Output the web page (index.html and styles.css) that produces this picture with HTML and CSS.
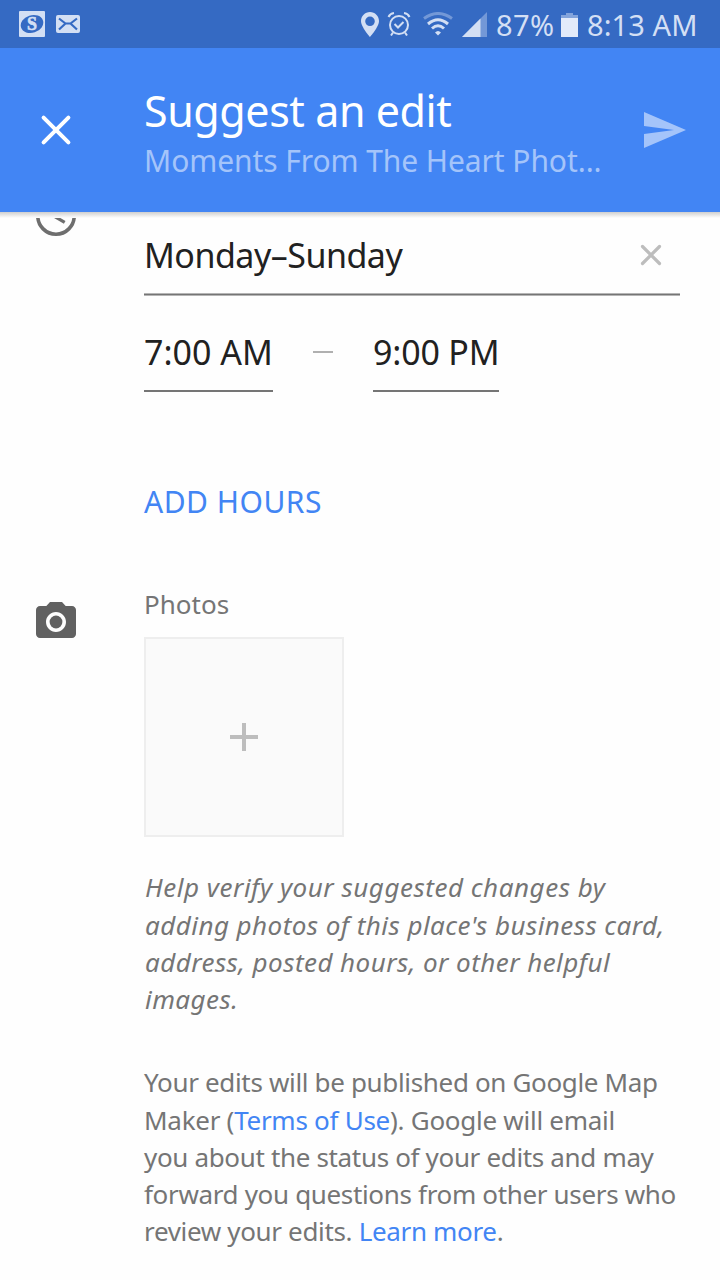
FILE: index.html
```html
<!DOCTYPE html>
<html lang="en">
<head>
    <meta charset="UTF-8">
    <meta name="viewport" content="width=device-width, initial-scale=1.0">
    <link rel="stylesheet" href="styles.css">
    <title>Suggest an edit</title>
</head>
<body>
    <div class="status-bar">
        <svg class="app-icon" width="26" height="26" viewBox="0 0 26 26">
            <rect width="26" height="26" rx="1" fill="#d3dff4"/>
            <ellipse cx="13" cy="13" rx="11.5" ry="8.8" transform="rotate(-18 13 13)" fill="#356ac3"/>
            <text x="13" y="19.300" text-anchor="middle" class="app-letter">S</text>
        </svg>
        <svg class="mail-icon" width="24" height="18" viewBox="0 0 24 18">
            <rect width="24" height="18" rx="2" fill="#d3dff4"/>
            <path d="M3 3.500l6.500 5h5l6.500-5M3 14.500l6.500-6M21 14.500l-6.500-6" fill="none" stroke="#356ac3" stroke-width="2.200"/>
        </svg>
        <div class="status-right">
            <svg class="pin-icon" width="18" height="25" viewBox="0 0 18 25">
                <path fill-rule="evenodd" d="M9 0C4 0 0 4 0 9c0 6 9 16 9 16s9-10 9-16c0-5-4-9-9-9zm0 4.500a4.800 4.800 0 1 1 0 9.600a4.800 4.800 0 0 1 0-9.600z" fill="#d3dff4"/>
            </svg>
            <svg class="alarm-icon" width="24" height="24" viewBox="0 0 24 24" fill="none" stroke="#d3dff4">
                <circle cx="12" cy="13" r="9" stroke-width="2"/>
                <path d="M7.500 12l3.500 3.500 5.500-5.500" stroke-width="2"/>
                <path d="M1.500 5Q3 1.500 7 1M22.500 5Q21 1.500 17 1M6 20.500l-2 3M18 20.500l2 3" stroke-width="2"/>
            </svg>
            <svg class="wifi-icon" width="30" height="24" viewBox="0 0 30 24" fill="none" stroke="#d3dff4" stroke-width="3">
                <path d="M1 6.500Q15-3.500 29 6.500" opacity=".4"/>
                <path d="M5 12Q15 3.500 25 12"/>
                <path d="M9 16.500Q15 11 21 16.500"/>
                <path d="M12 20.500q3-3 6 0l-3 3z" fill="#d3dff4" stroke="none"/>
            </svg>
            <svg class="signal-icon" width="25" height="25" viewBox="0 0 25 25" fill="#d3dff4">
                <path d="M0 25L25 0v25z" opacity=".4"/>
                <path d="M0 25L18.500 6.500V25z"/>
            </svg>
            <span class="percent">87%</span>
            <svg class="battery-icon" width="17" height="25" viewBox="0 0 17 25" fill="#e2eafa">
                <path d="M5 1h7v2h5v3H0V3h5z" opacity=".45"/>
                <path d="M0 6h17v19H0z"/>
            </svg>
            <span class="clock">8:13 AM</span>
        </div>
    </div>

    <header>
        <svg class="close-icon" width="48" height="48" viewBox="0 0 24 24">
            <path d="M5.800 5.800l12.400 12.400M18.200 5.800L5.800 18.200" stroke="#fff" stroke-width="2" stroke-linecap="round"/>
        </svg>
        <div class="titles">
            <h1>Suggest an edit</h1>
            <p>Moments From The Heart Phot...</p>
        </div>
        <svg class="send-icon" width="48" height="48" viewBox="0 0 24 24">
            <path d="M2 21l21-9L2 3v7l15 2-15 2z" fill="#a4c4fa"/>
        </svg>
    </header>
    <div class="header-shadow"></div>

    <main>
        <section class="hours">
            <svg class="row-icon time-icon" width="48" height="48" viewBox="0 0 24 24" fill="none" stroke="#6e6e6e">
                <circle cx="12" cy="12" r="9.100" stroke-width="1.800"/>
                <path d="M11.750 7v5.500l4.600 2.700" stroke-width="1.600"/>
            </svg>
            <div class="content">
                <div class="days">
                    <span>Monday–Sunday</span>
                    <svg class="clear-icon" width="24" height="24" viewBox="0 0 24 24">
                        <path d="M3.500 3.500l17 17M20.500 3.500l-17 17" stroke="#bdbdbd" stroke-width="3.200" stroke-linecap="round"/>
                    </svg>
                </div>
                <div class="times">
                    <span class="time open">7:00 AM</span>
                    <span class="dash"></span>
                    <span class="time close">9:00 PM</span>
                </div>
                <a class="add-hours">ADD HOURS</a>
            </div>
        </section>

        <section class="photos">
            <svg class="row-icon camera-icon" width="48" height="48" viewBox="0 0 24 24" fill="#616161">
                <circle cx="12" cy="12" r="3.200"/>
                <path d="M9 2L7.170 4H4c-1.100 0-2 .9-2 2v12c0 1.100.9 2 2 2h16c1.100 0 2-.9 2-2V6c0-1.100-.9-2-2-2h-3.170L15 2H9zm3 15c-2.760 0-5-2.240-5-5s2.240-5 5-5 5 2.240 5 5-2.240 5-5 5z"/>
            </svg>
            <div class="content">
                <h2>Photos</h2>
                <div class="add-photo">
                    <svg width="28" height="28" viewBox="0 0 28 28">
                        <path d="M12 0h4v12h12v4H16v12h-4V16H0v-4h12z" fill="#bdbdbd"/>
                    </svg>
                </div>
                <p class="help">
                    <span class="wide">Help verify your suggested changes by</span>
                    <span>adding photos of this place's business card,</span>
                    <span>address, posted hours, or other helpful</span>
                    <span>images.</span>
                </p>
                <p class="terms">
                    <span>Your edits will be published on Google Map</span>
                    <span class="wide">Maker (<a>Terms of Use</a>). Google will email</span>
                    <span>you about the status of your edits and may</span>
                    <span>forward you questions from other users who</span>
                    <span>review your edits. <a>Learn more</a>.</span>
                </p>
            </div>
        </section>
    </main>
</body>
</html>
```
FILE: styles.css
```css
body {
    font-family: "Noto Sans", sans-serif;
    background-color: #fefefe;
    color: #212121;
    width: 720px;
    height: 1280px;
    margin: 0;
    overflow: hidden;
}

h1, h2, p {
    margin: 0;
    font-weight: normal;
}

svg {
    display: block;
    flex-shrink: 0;
}

span, h1, h2, .titles p, .add-hours {
    white-space: nowrap;
}

.status-bar {
    display: flex;
    align-items: center;
    box-sizing: border-box;
    height: 48px;
    padding: 0 23px 0 19px;
    background-color: #356ac3;
    color: #d3dff4;
    font-size: 29px;
    line-height: 46px;
}

.app-letter {
    font: bold 18px "Liberation Serif", serif;
    fill: #d3dff4;
    stroke: #d3dff4;
    stroke-width: .6px;
}

.mail-icon {
    margin-left: 11px;
}

.status-right {
    display: flex;
    align-items: center;
    margin-left: auto;
}

.alarm-icon {
    margin-left: 8px;
}

.wifi-icon {
    margin-left: 12px;
}

.signal-icon {
    margin-left: 9px;
}

.percent {
    width: 65px;
    margin-left: 9px;
    padding-top: 2px;
    letter-spacing: .4px;
}

.clock {
    width: 110px;
    margin-left: 9px;
    padding-top: 2px;
    letter-spacing: .1px;
}

header {
    display: flex;
    align-items: flex-start;
    box-sizing: border-box;
    height: 164px;
    padding-left: 32px;
    background-color: #4285f4;
    color: #fff;
}

.close-icon {
    margin-top: 58px;
}

.titles {
    width: 496px;
    margin-left: 64px;
    padding-top: 38px;
}

h1 {
    font-size: 43px;
    line-height: 50px;
    letter-spacing: -.43px;
}

.titles p {
    margin-top: 5px;
    color: #a4c4fa;
    font-size: 30px;
    line-height: 40px;
    letter-spacing: -.08px;
}

.send-icon {
    margin-top: 58px;
}

.header-shadow {
    height: 6px;
    background: linear-gradient(#cfcfcf, #fefefe);
}

main {
    height: 1062px;
    overflow: hidden;
}

section {
    display: flex;
    padding-left: 32px;
}

.content {
    width: 536px;
    margin-left: 64px;
}

.hours {
    height: 367px;
}

.time-icon {
    margin-top: -26px;
}

.days {
    display: flex;
    box-sizing: border-box;
    height: 77px;
    padding: 14px 17px 0 0;
    justify-content: space-between;
    border-bottom: 1px solid #757575;
    box-shadow: 0 1px #b5b5b5, inset 0 -1px #b5b5b5;
    font-size: 34px;
    line-height: 46px;
    letter-spacing: -.5px;
}

.clear-icon {
    margin-top: 11px;
}

.times {
    display: flex;
    align-items: center;
    margin-top: 33px;
}

.time {
    box-sizing: border-box;
    height: 64px;
    border-bottom: 2px solid #757575;
    font-size: 34px;
    line-height: 48px;
}

.open {
    width: 129px;
}

.close {
    width: 126px;
    letter-spacing: -.2px;
}

.dash {
    width: 20px;
    height: 2px;
    margin: 0 40px;
    position: relative;
    top: -8px;
    background-color: #b0b0b0;
}

.add-hours {
    display: block;
    margin-top: 90px;
    color: #4285f4;
    font-size: 30px;
    line-height: 40px;
    letter-spacing: .5px;
}

.camera-icon {
    margin-top: 13px;
}

h2 {
    padding-top: 1px;
    color: #757575;
    font-size: 26px;
    line-height: 37px;
}

.add-photo {
    display: flex;
    align-items: center;
    justify-content: center;
    box-sizing: border-box;
    width: 200px;
    height: 200px;
    margin-top: 14px;
    border: 2px solid #eee;
    background-color: #fafafa;
}

.help, .terms {
    color: #757575;
    font-size: 26px;
    line-height: 37.200px;
}

.help {
    margin-top: 32.400px;
    padding-left: 1px;
    font-style: italic;
    letter-spacing: .45px;
}

.help .wide {
    letter-spacing: .53px;
}

.terms {
    margin-top: 46.200px;
    letter-spacing: -.34px;
}

.terms .wide {
    letter-spacing: -.27px;
}

.help span, .terms span {
    display: block;
}

.terms a {
    color: #4285f4;
}
```
